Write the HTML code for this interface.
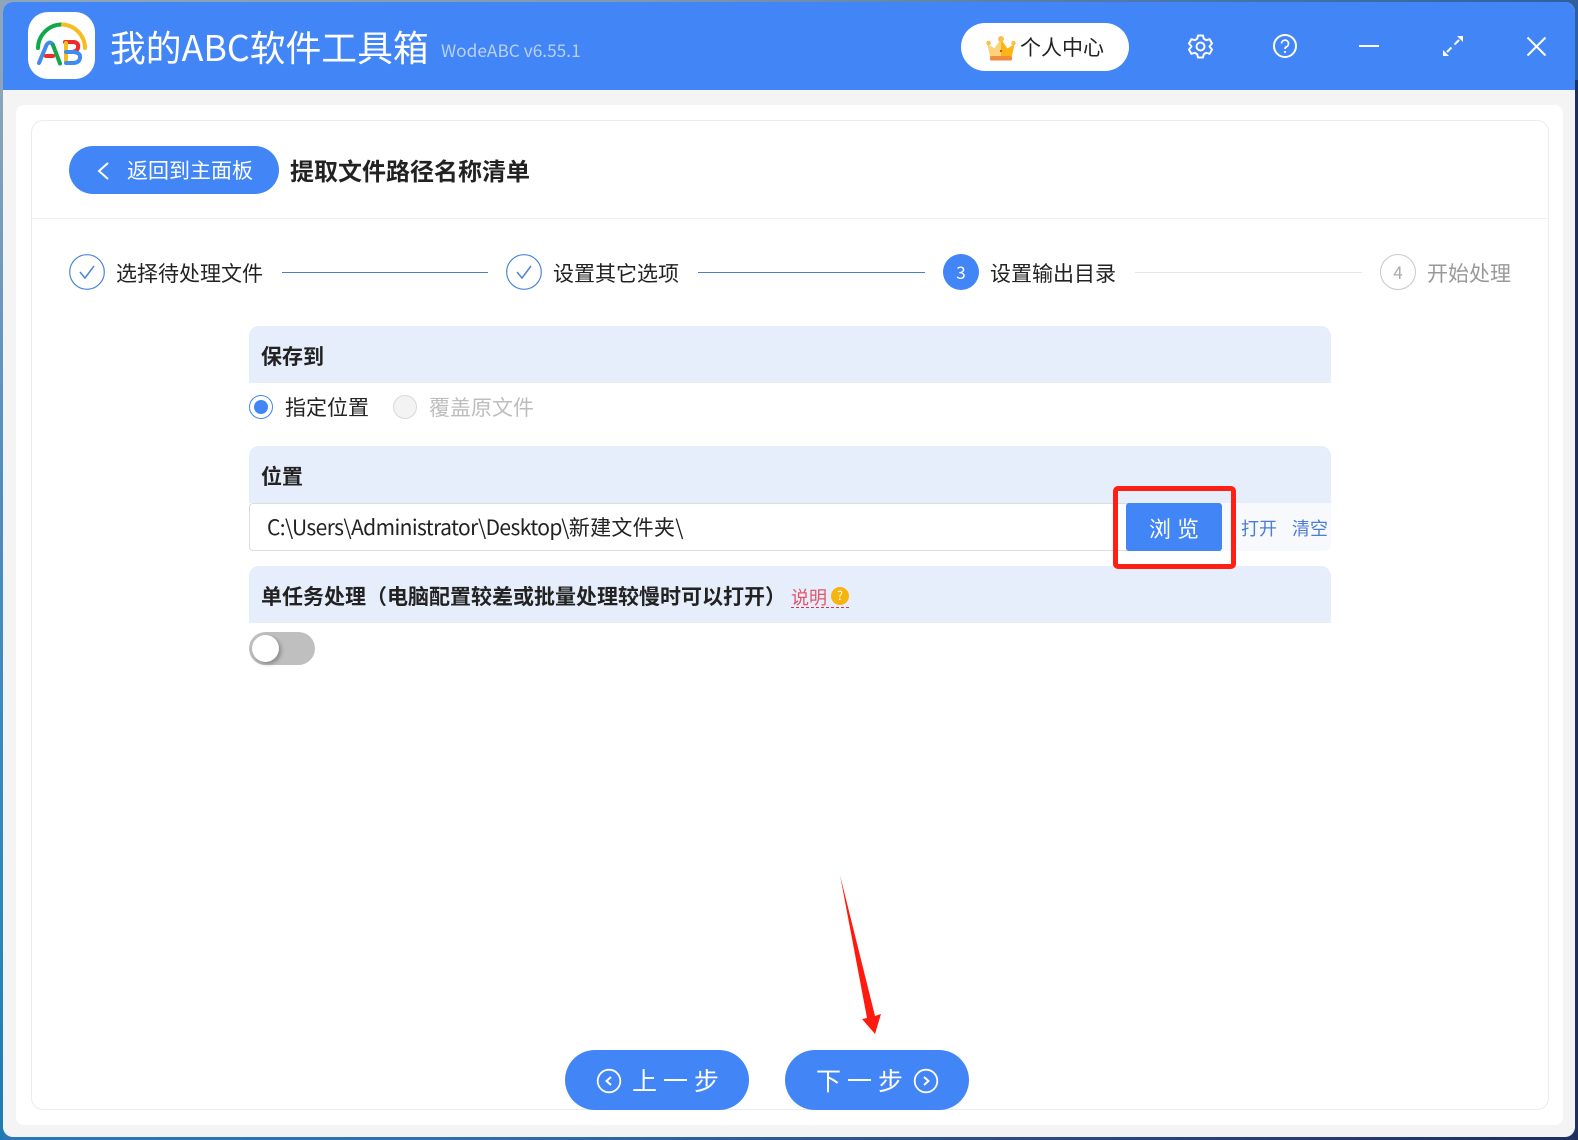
<!DOCTYPE html>
<html lang="zh-CN">
<head>
<meta charset="utf-8">
<title>我的ABC软件工具箱</title>
<style>
html,body{margin:0;padding:0}
body{width:1578px;height:1140px;overflow:hidden;position:relative;background:linear-gradient(90deg,#2a78b8 0%,#2f6fb0 30%,#2c4f8c 60%,#1f2f60 100%);font-family:"Liberation Sans","Noto Sans CJK SC",sans-serif;color:#222}
.a{position:absolute;box-sizing:border-box}
.t{position:absolute;white-space:nowrap;line-height:1;font-family:"Noto Sans CJK SC","Liberation Sans",sans-serif}
.sec{position:absolute;left:249px;width:1082px;height:57px;background:#e6eefb;border-radius:10px 10px 0 0}
.h{font-size:21px;font-weight:700;color:#222}
.b{background:#4285f7}
</style>
</head>
<body>
<div class="a" style="left:0;top:0;width:1578px;height:80px;background:linear-gradient(90deg,#8fa6ba,#7f9ab0 40%,#4f7aa8 70%,#2f5f9f)"></div>
<div class="a" style="left:0;top:60px;width:3px;height:1080px;background:linear-gradient(180deg,#8fa6ba,#4f8cc0 40%,#2a88b8 80%,#1f7ab0)"></div>
<div class="a" style="left:3px;top:2px;width:1572px;height:1135px;background:#f4f4f4;border-radius:10px;overflow:hidden">
  <div class="a b" style="left:0;top:0;width:1572px;height:88px"></div>
</div>

<svg class="a" style="left:28px;top:12px" width="68" height="68" viewBox="0 0 68 68">
  <rect x="0" y="0" width="67" height="67" rx="20" fill="#fff"/>
  <g fill="none" stroke-width="4" stroke-linecap="round">
    <path d="M10 36A24 24 0 0 1 33 12.500" stroke="#12a84a"/>
    <path d="M35 12.500A24 24 0 0 1 57 36" stroke="#f7bd1c"/>
    <path d="M11 51L18.500 33Q22 28 25 33" stroke="#3f8bee"/>
    <path d="M25 33L32 51.500" stroke="#12a84a"/>
    <path d="M18 44H25" stroke="#ee2a2a"/>
    <path d="M37 30H46Q51 31 50 36Q49 40 42 40" stroke="#ee2a2a"/>
    <path d="M38 31V50" stroke="#f7bd1c"/>
    <path d="M38 40H46Q53 41 52 46Q51 51 45 51H38" stroke="#3f8bee"/>
  </g>
</svg>

<div class="t" style="left:110px;top:29px;font-size:35.800px;color:#fff">我的ABC软件工具箱</div>
<div class="t" style="left:441px;top:41px;font-size:17.300px;color:#b9d1fb">WodeABC v6.55.1</div>

<div class="a" style="left:961px;top:23px;width:168px;height:48px;background:#fff;border-radius:24px"></div>
<svg class="a" style="left:986px;top:35px" width="30" height="27" viewBox="0 0 30 27">
  <path d="M4 21L1.500 9L8.500 13.500L15 4L21.500 13.500L28.500 9L26 21Z" fill="#fbb515"/>
  <path d="M4 21L1.500 9L8.500 13.500L15 4V21Z" fill="#fdd27a"/>
  <circle cx="15" cy="4" r="3" fill="#fbc04a"/><circle cx="2.500" cy="8" r="2.300" fill="#fbc04a"/><circle cx="27.500" cy="8" r="2.300" fill="#fbc04a"/>
  <rect x="4" y="21" width="22" height="4.500" rx="1" fill="#f28a3c"/>
  <circle cx="15" cy="16" r="1.100" fill="#e23b2a"/>
</svg>
<div class="t" style="left:1020px;top:37px;font-size:21px;color:#222">个人中心</div>

<svg class="a" style="left:1187px;top:33px" width="27" height="27" viewBox="0 0 27 27" fill="none" stroke="#fff" stroke-width="2" stroke-linejoin="round">
  <path d="M11 2.500H16L16.800 5.800L19.300 7.200L22.600 6.200L25 10.500L22.500 13.500L25 16.500L22.600 20.800L19.300 19.800L16.800 21.200L16 24.500H11L10.200 21.200L7.700 19.800L4.400 20.800L2 16.500L4.500 13.500L2 10.500L4.400 6.200L7.700 7.200L10.200 5.800Z"/>
  <circle cx="13.500" cy="13.500" r="4"/>
</svg>
<svg class="a" style="left:1272px;top:33px" width="26" height="26" viewBox="0 0 26 26" fill="none" stroke="#fff" stroke-width="2">
  <circle cx="13" cy="13" r="11"/>
  <path d="M9.500 10.500A3.500 3.500 0 1 1 14.500 13.800Q13 14.500 13 16" stroke-width="1.700"/>
  <circle cx="13" cy="19" r="1.100" fill="#fff" stroke="none"/>
</svg>
<div class="a" style="left:1359px;top:45px;width:20px;height:2px;background:#fff"></div>
<svg class="a" style="left:1442px;top:35px" width="22" height="22" viewBox="0 0 22 22" fill="#fff" stroke="#fff">
  <path d="M21 1V7L15 1Z" stroke="none"/>
  <path d="M1 21V15L7 21Z" stroke="none"/>
  <path d="M17 5L12.500 9.500M5 17L9.500 12.500" stroke-width="2" fill="none"/>
</svg>
<svg class="a" style="left:1526px;top:36px" width="21" height="21" viewBox="0 0 21 21" fill="none" stroke="#fff" stroke-width="2">
  <path d="M1.500 1.500L19.500 19.500M19.500 1.500L1.500 19.500"/>
</svg>

<div class="a" style="left:16px;top:105px;width:1547px;height:1020px;background:#fff;border-radius:8px"></div>
<div class="a" style="left:31px;top:120px;width:1518px;height:990px;background:#fff;border:1px solid #ececec;border-radius:12px"></div>
<div class="a" style="left:32px;top:218px;width:1516px;height:1px;background:#eee"></div>

<div class="a b" style="left:69px;top:146px;width:210px;height:48px;border-radius:24px"></div>
<svg class="a" style="left:96px;top:161px" width="16" height="20" viewBox="0 0 16 20" fill="none" stroke="#fff" stroke-width="2"><path d="M12 2L3 10L12 18"/></svg>
<div class="t" style="left:127px;top:160px;font-size:21px;color:#fff">返回到主面板</div>
<div class="t" style="left:290px;top:158px;font-size:24px;font-weight:700;color:#222">提取文件路径名称清单</div>

<svg class="a" style="left:69px;top:254px" width="36" height="36" viewBox="0 0 36 36" fill="none" stroke="#4a86d8"><circle cx="18" cy="18" r="17.300" stroke-width="1.200"/><path d="M11 18L16 24L25 12" stroke-width="1.500"/></svg>
<div class="t" style="left:116px;top:263px;font-size:21px;color:#222">选择待处理文件</div>
<div class="a" style="left:282px;top:272px;width:206px;height:1px;background:#4a7fc4"></div>
<svg class="a" style="left:506px;top:254px" width="36" height="36" viewBox="0 0 36 36" fill="none" stroke="#4a86d8"><circle cx="18" cy="18" r="17.300" stroke-width="1.200"/><path d="M11 18L16 24L25 12" stroke-width="1.500"/></svg>
<div class="t" style="left:553px;top:263px;font-size:21px;color:#222">设置其它选项</div>
<div class="a" style="left:698px;top:272px;width:227px;height:1px;background:#4a7fc4"></div>
<div class="a b" style="left:943px;top:254px;width:36px;height:36px;border-radius:50%"></div>
<div class="t" style="left:943px;top:263px;width:36px;text-align:center;font-size:17px;color:#fff">3</div>
<div class="t" style="left:990px;top:263px;font-size:21px;color:#222">设置输出目录</div>
<div class="a" style="left:1135px;top:272px;width:227px;height:1px;background:#e6e6e6"></div>
<div class="a" style="left:1380px;top:254px;width:36px;height:36px;border-radius:50%;border:1px solid #c8c8c8"></div>
<div class="t" style="left:1380px;top:263px;width:36px;text-align:center;font-size:17px;color:#aaa">4</div>
<div class="t" style="left:1427px;top:263px;font-size:21px;color:#999">开始处理</div>

<div class="sec" style="top:326px"></div>
<div class="t h" style="left:261px;top:346px">保存到</div>
<div class="a" style="left:249px;top:395px;width:24px;height:24px;border-radius:50%;border:1px solid #4285f7;background:#fff"></div>
<div class="a b" style="left:254px;top:400px;width:14px;height:14px;border-radius:50%"></div>
<div class="t" style="left:285px;top:397px;font-size:21px;color:#222">指定位置</div>
<div class="a" style="left:393px;top:395px;width:24px;height:24px;border-radius:50%;border:1px solid #d8d8d8;background:#f3f3f3"></div>
<div class="t" style="left:429px;top:397px;font-size:21px;color:#bdbdbd">覆盖原文件</div>

<div class="sec" style="top:446px"></div>
<div class="t h" style="left:261px;top:466px">位置</div>
<div class="a" style="left:1222px;top:503px;width:109px;height:48px;background:#f8f9fc;border-radius:0 0 6px 0"></div>
<div class="a" style="left:249px;top:503px;width:880px;height:48px;background:#fff;border:1px solid #dcdcdc;border-right:0;border-radius:4px 0 0 4px"></div>
<div class="t" style="left:267px;top:517px;font-size:21px;color:#222"><span style="letter-spacing:-.6px">C:\Users\Administrator\Desktop\</span><span style="letter-spacing:.3px">新建文件夹\</span></div>
<div class="a b" style="left:1126px;top:503px;width:96px;height:48px;border-radius:3px"></div>
<div class="t" style="left:1149px;top:517px;font-size:22px;color:#fff;letter-spacing:6px">浏览</div>
<div class="t" style="left:1241px;top:519px;font-size:18px;color:#4a7dd6">打开</div>
<div class="t" style="left:1292px;top:519px;font-size:18px;color:#4a7dd6">清空</div>

<div class="sec" style="top:566px"></div>
<div class="t h" style="left:261px;top:586px">单任务处理（电脑配置较差或批量处理较慢时可以打开）</div>
<div class="t" style="left:791px;top:588px;font-size:18px;color:#e2566a">说明</div>
<div class="a" style="left:831px;top:587px;width:18px;height:18px;border-radius:50%;background:#f5b50e"></div>
<div class="t" style="left:831px;top:590px;width:18px;text-align:center;font-size:12px;color:#fff">?</div>
<div class="a" style="left:791px;top:607px;width:58px;height:0;border-top:1px dashed #d6304a"></div>
<div class="a" style="left:249px;top:632px;width:66px;height:33px;border-radius:17px;background:#bfbfbf"></div>
<div class="a" style="left:252px;top:635px;width:27px;height:27px;border-radius:50%;background:#fff;box-shadow:2px 2px 4px rgba(0,0,0,.3)"></div>

<div class="a" style="left:1113px;top:486px;width:123px;height:83px;border:5px solid #ff2015;border-radius:5px"></div>

<svg class="a" style="left:830px;top:870px" width="60" height="170" viewBox="830 870 60 170"><path d="M840 875L875 1016L881 1014L875 1034L862 1019L867 1018Z" fill="#ff1a10"/></svg>

<div class="a b" style="left:565px;top:1050px;width:184px;height:60px;border-radius:30px"></div>
<svg class="a" style="left:596px;top:1068px" width="26" height="26" viewBox="0 0 26 26" fill="none" stroke="#fff" stroke-width="1.800"><circle cx="13" cy="13" r="11.300"/><path d="M15 9L10.500 13L15 17" stroke-width="2"/></svg>
<div class="t" style="left:632px;top:1068px;font-size:25px;color:#fff;letter-spacing:6px">上一步</div>
<div class="a b" style="left:785px;top:1050px;width:184px;height:60px;border-radius:30px"></div>
<div class="t" style="left:816px;top:1068px;font-size:25px;color:#fff;letter-spacing:6px">下一步</div>
<svg class="a" style="left:913px;top:1068px" width="26" height="26" viewBox="0 0 26 26" fill="none" stroke="#fff" stroke-width="1.800"><circle cx="13" cy="13" r="11.300"/><path d="M11 9L15.500 13L11 17" stroke-width="2"/></svg>
</body>
</html>
